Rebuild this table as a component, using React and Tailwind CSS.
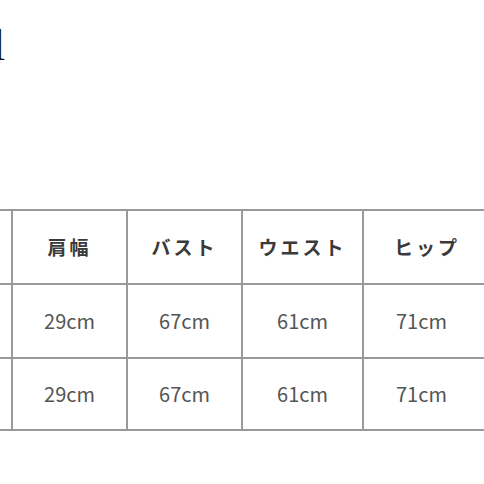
import React from "react";

const headers = ["", "肩幅", "バスト", "ウエスト", "ヒップ"];
const rows = [
  ["", "29cm", "67cm", "61cm", "71cm"],
  ["", "29cm", "67cm", "61cm", "71cm"],
];

export default function App() {
  return (
    <div className="w-[484px] h-[484px] overflow-hidden bg-white relative" style={{ fontFamily: '"Noto Sans CJK JP", "Noto Sans", sans-serif' }}>
      <div className="h-[209px] relative">
        <div
          className="absolute left-[-7px] top-[24px] text-[44px] leading-none text-[#111111]"
          style={{ fontFamily: '"Liberation Serif", serif' }}
        >
          l
        </div>
      </div>
      <div className="ml-[-100px] w-[800px] border-t-2 border-l-2 border-[#9a9a9a] grid grid-cols-[111px_115px_115px_121px_200px]">
        {headers.map((h, i) => (
          <div
            key={"h" + i}
            className={
              (i === 4 ? "justify-start pl-[30px] " : "justify-center ") +
              "h-[74px] border-r-2 border-b-2 border-[#9a9a9a] flex items-center text-[19px] font-bold tracking-[3px] text-[#3a3a3a]"
            }
          >
            {h}
          </div>
        ))}
        {rows.map((r, ri) =>
          r.map((c, ci) => (
            <div
              key={ri + "-" + ci}
              className={
                (ri === 0 ? "h-[74px] " : "h-[72px] ") +
                (ci === 4 ? "justify-start pl-[32px] " : "justify-center ") +
                "border-r-2 border-b-2 border-[#9a9a9a] flex items-center text-[20px] text-[#555]"
              }
            >
              {c}
            </div>
          ))
        )}
      </div>
    </div>
  );
}
